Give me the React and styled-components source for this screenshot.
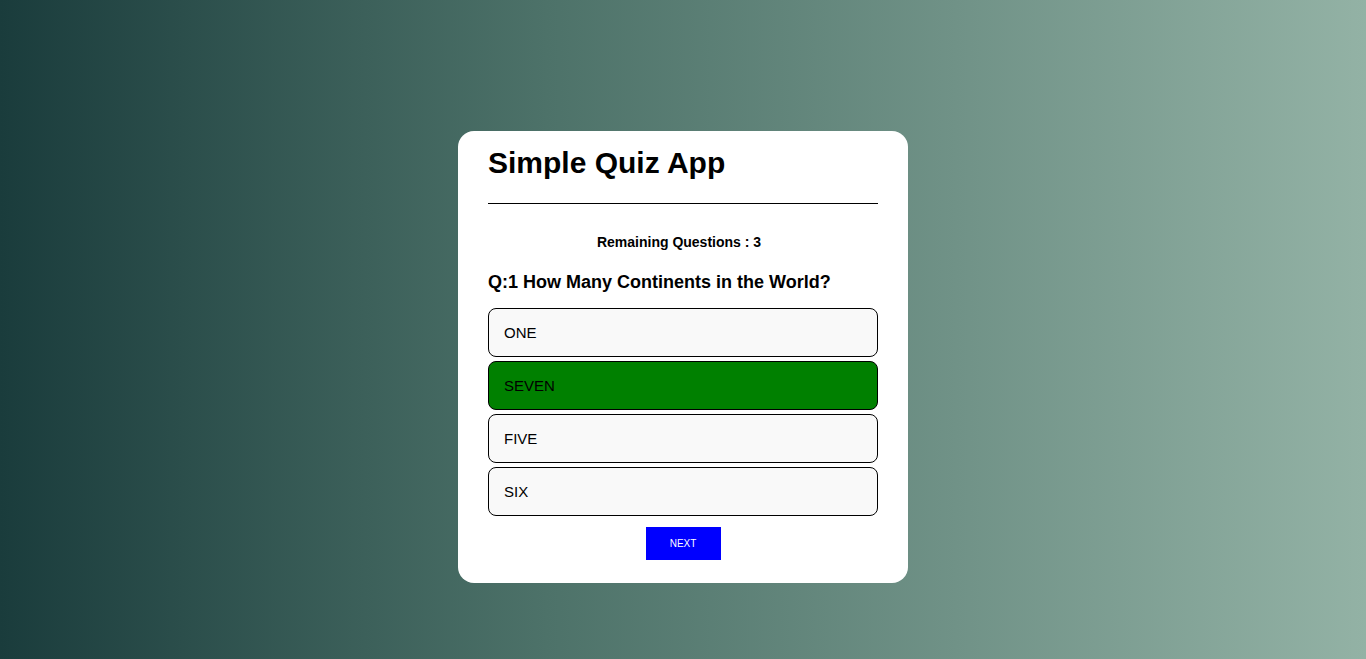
import React, { useState } from 'react'
import styled, { createGlobalStyle } from 'styled-components'

const GlobalStyle = createGlobalStyle`
  * { box-sizing: border-box; }
  html, body { margin: 0; padding: 0; }
  body {
    font-family: "Liberation Sans", Arial, sans-serif;
    background: linear-gradient(90deg, #1a3c3c 0%, #4d7269 40%, #93b2a5 100%);
    min-height: 659px;
  }
`

const Page = styled.div`
  height: 659px;
  display: flex;
  justify-content: center;
  align-items: flex-start;
  padding-top: 131px;
`

const Card = styled.div`
  width: 450px;
  background: #fff;
  border-radius: 16px;
  padding: 14px 30px 23px;
`

const Title = styled.h1`
  margin: 0;
  font-size: 30px;
  line-height: 35px;
  font-weight: bold;
  color: #000;
  padding-bottom: 23px;
  border-bottom: 1px solid #000;
`

const Remaining = styled.p`
  margin: 30px 0 0;
  padding-right: 8px;
  text-align: center;
  font-size: 14px;
  line-height: 16px;
  font-weight: bold;
`

const Question = styled.h2`
  margin: 22px 0 15px;
  font-size: 18px;
  line-height: 21px;
  font-weight: bold;
`

const Options = styled.div`
  display: flex;
  flex-direction: column;
  gap: 4px;
`

const Option = styled.button`
  height: 49px;
  width: 100%;
  text-align: left;
  padding: 0 15px;
  font-family: inherit;
  font-size: 15px;
  color: #000;
  background: ${p => (p.$correct ? '#008000' : '#f9f9f9')};
  border: 1px solid #000;
  border-radius: 8px;
  cursor: pointer;
`

const Footer = styled.div`
  display: flex;
  justify-content: center;
  margin-top: 11px;
`

const NextButton = styled.button`
  width: 75px;
  height: 33px;
  background: #0000ff;
  color: #fff;
  border: none;
  font-family: inherit;
  font-size: 10px;
  cursor: pointer;
`

const answers = ['ONE', 'SEVEN', 'FIVE', 'SIX']

export default function App() {
  const [picked] = useState('SEVEN')

  return (
    <>
      <GlobalStyle />
      <Page>
        <Card>
          <Title>Simple Quiz App</Title>
          <Remaining>Remaining Questions : 3</Remaining>
          <Question>Q:1 How Many Continents in the World?</Question>
          <Options>
            {answers.map(a => (
              <Option key={a} $correct={a === picked}>{a}</Option>
            ))}
          </Options>
          <Footer>
            <NextButton>NEXT</NextButton>
          </Footer>
        </Card>
      </Page>
    </>
  )
}
